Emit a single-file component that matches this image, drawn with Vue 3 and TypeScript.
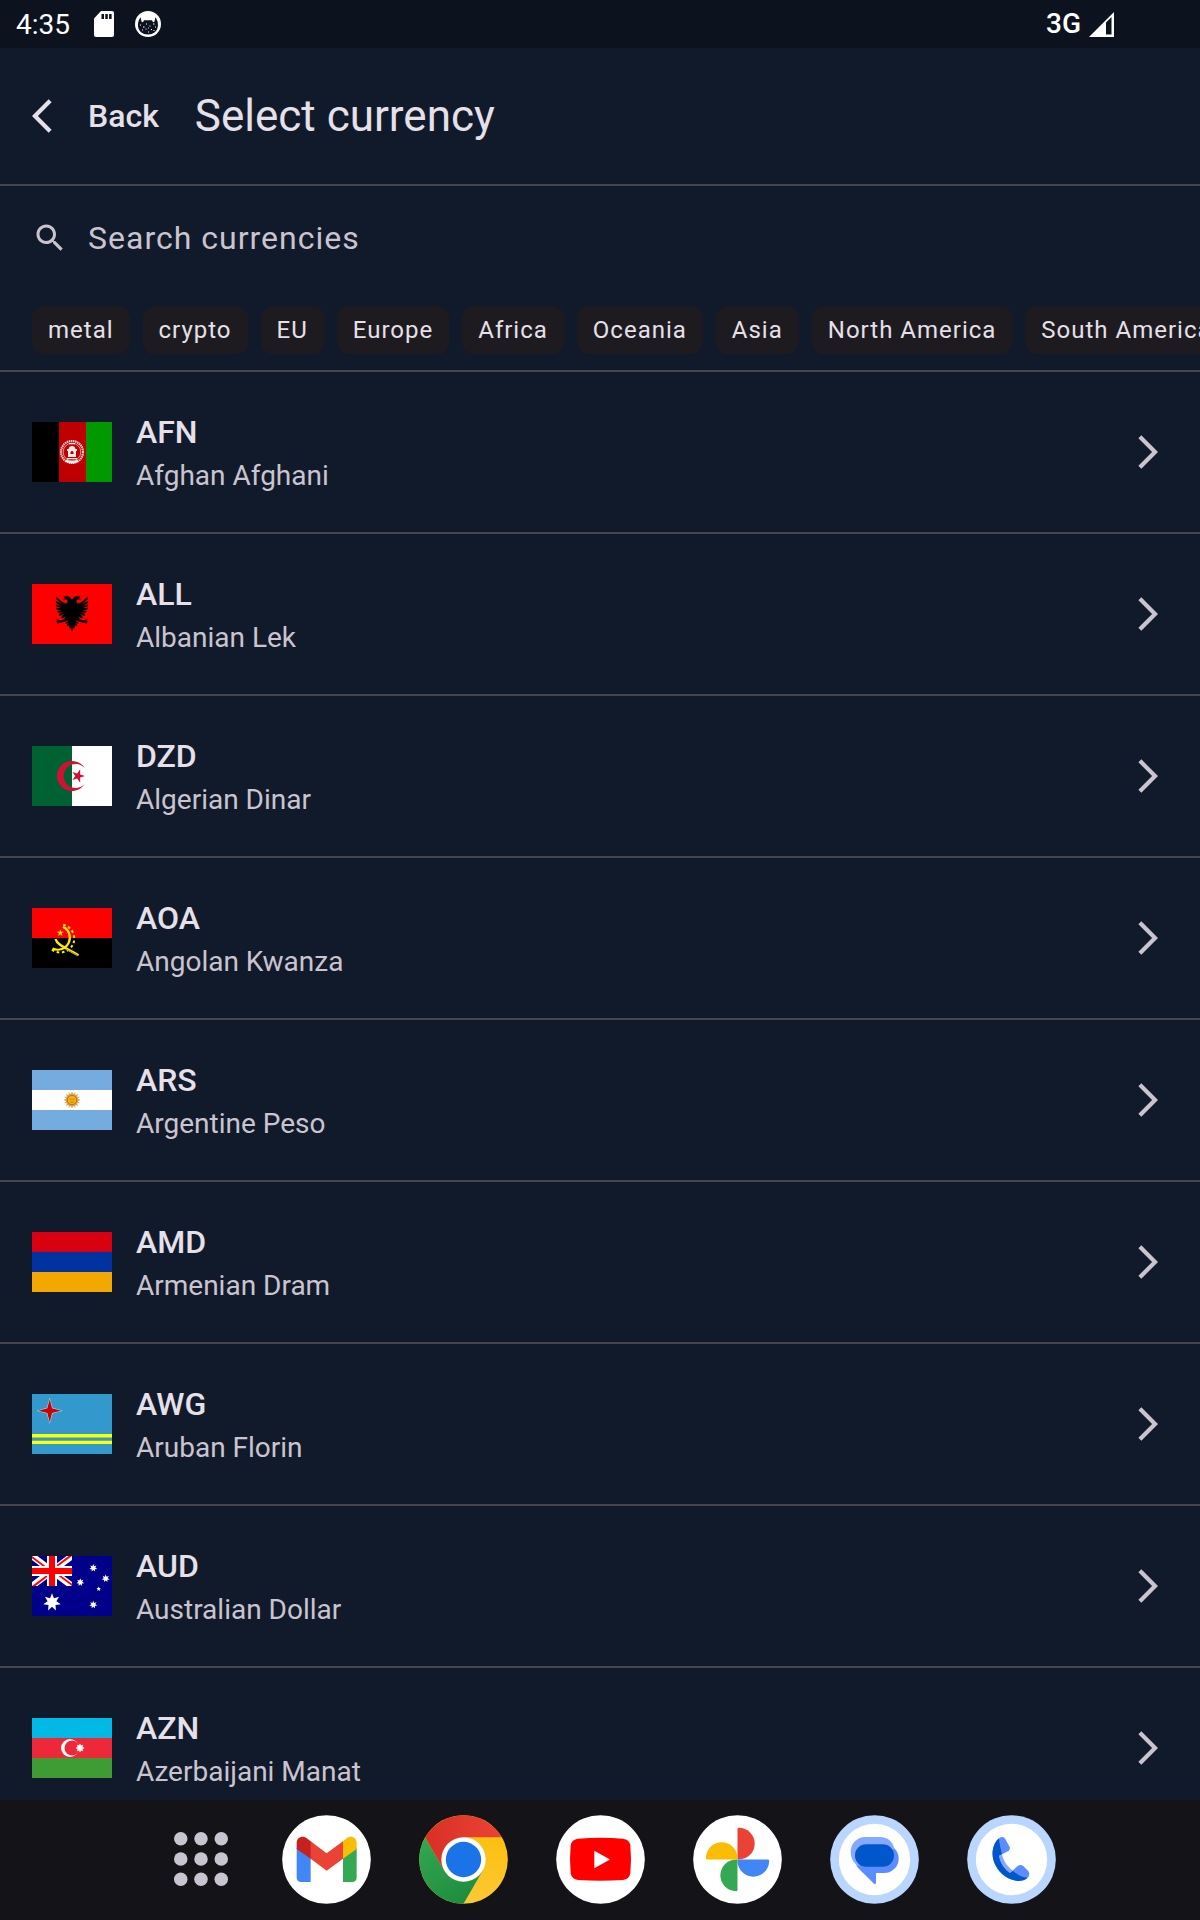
<script setup lang="ts">
import { computed, ref } from 'vue'

interface Currency {
  code: string
  name: string
}

const currencies: Currency[] = [
  { code: 'AFN', name: 'Afghan Afghani' },
  { code: 'ALL', name: 'Albanian Lek' },
  { code: 'DZD', name: 'Algerian Dinar' },
  { code: 'AOA', name: 'Angolan Kwanza' },
  { code: 'ARS', name: 'Argentine Peso' },
  { code: 'AMD', name: 'Armenian Dram' },
  { code: 'AWG', name: 'Aruban Florin' },
  { code: 'AUD', name: 'Australian Dollar' },
  { code: 'AZN', name: 'Azerbaijani Manat' },
]

const tags: string[] = [
  'metal',
  'crypto',
  'EU',
  'Europe',
  'Africa',
  'Oceania',
  'Asia',
  'North America',
  'South America',
]

const query = ref('')

const visible = computed(() => {
  const q = query.value.trim().toLowerCase()
  return currencies.filter((c) => (c.code + ' ' + c.name).toLowerCase().includes(q))
})

// Points of a regular star; the first tip points at `turn` degrees (0 = right).
function star(cx: number, cy: number, outer: number, inner: number, tips: number, turn = -90): string {
  const points: string[] = []
  for (let i = 0; i < tips * 2; i++) {
    const angle = ((turn + (i * 180) / tips) * Math.PI) / 180
    const r = i % 2 === 0 ? outer : inner
    points.push(`${(cx + r * Math.cos(angle)).toFixed(2)},${(cy + r * Math.sin(angle)).toFixed(2)}`)
  }
  return points.join(' ')
}
</script>

<template>
  <div class="screen">
    <div class="status">
      <span class="clock">4:35</span>
      <svg class="sd" viewBox="0 0 20 26" aria-hidden="true">
        <path fill="#fff" d="M7 0H18a2 2 0 0 1 2 2V24a2 2 0 0 1-2 2H2a2 2 0 0 1-2-2V7.500z" />
        <path fill="#0c121e" d="M7.500 3h2.500v5H7.500zM11.300 3h2.500v5h-2.500zM15.100 3h2.500v5h-2.500z" />
      </svg>
      <svg class="cat" viewBox="0 0 26 26" aria-hidden="true">
        <circle cx="13" cy="13" r="13" fill="#fff" />
        <path fill="#0c121e" d="M5.500 6.300L6.600 10.800 8 11.300 9 9.200H17l1 2.100 1.400-.5 1.100-4.500C24.800 12 24.300 23.500 13 23.500S1.200 12 5.500 6.300z" />
        <path
          stroke="#fff"
          stroke-width="1"
          d="M5 14h1M8 16h1.500M11 13h1M14.500 15h1M18 13h1.500M20 16h1M7 19h1M10.500 18h1M16 18.500h1M13 21h1M18.500 19.500h1M13 17h.8"
        />
      </svg>
      <span class="network">3G</span>
      <svg class="signal" viewBox="0 0 25 25" aria-hidden="true">
        <path fill="#fff" fill-rule="evenodd" d="M25 0V25H0zM17 10.500V22.500H22.500V5z" />
      </svg>
    </div>

    <header class="top">
      <button class="back" type="button">
        <svg viewBox="0 0 24 24" aria-hidden="true">
          <path fill="currentColor" d="M17.770 3.770 16 2 6 12l10 10 1.770-1.770L9.540 12z" />
        </svg>
        <span>Back</span>
      </button>
      <h1>Select currency</h1>
    </header>

    <section class="filters">
      <label class="search">
        <svg viewBox="0 0 24 24" aria-hidden="true">
          <path
            fill="currentColor"
            d="M15.500 14h-.79l-.28-.27C15.410 12.590 16 11.110 16 9.500 16 5.910 13.090 3 9.500 3S3 5.910 3 9.500 5.910 16 9.500 16c1.610 0 3.090-.59 4.230-1.570l.27.28v.79l5 4.990L20.490 19l-4.990-5zm-6 0C7.010 14 5 11.990 5 9.500S7.010 5 9.500 5 14 7.010 14 9.500 11.990 14 9.500 14z"
          />
        </svg>
        <input v-model="query" type="text" placeholder="Search currencies" aria-label="Search currencies" />
      </label>
      <div class="chips">
        <button v-for="tag in tags" :key="tag" type="button" class="chip">{{ tag }}</button>
      </div>
    </section>

    <ul class="list">
      <li v-for="c in visible" :key="c.code">
        <button type="button" class="row">
          <svg class="flag" viewBox="0 0 80 60" aria-hidden="true">
            <g v-if="c.code === 'AFN'">
              <rect width="80" height="60" fill="#000" />
              <rect x="27" width="27" height="60" fill="#bf0000" />
              <rect x="54" width="26" height="60" fill="#090" />
              <g fill="none" stroke="#fff">
                <circle cx="40" cy="30" r="11" stroke-width="2.200" stroke-dasharray="1.500 .6" opacity=".8" />
                <circle cx="40" cy="30" r="8.800" stroke-width=".8" opacity=".7" />
                <path d="M34 38.500q6 3.500 12 0" stroke-width="2.400" opacity=".85" />
              </g>
              <path fill="#fff" opacity=".9" d="M36 35V29h-1v-2h1.500q.5-3 3.500-3t3.500 3H45v2h-1v6zM35 36h10v1.200H35zM37 21h6v1.200H37z" />
              <path fill="#bf0000" d="M38.500 30q1.500-2 3 0v2h-3z" />
            </g>
            <g v-else-if="c.code === 'ALL'">
              <rect width="80" height="60" fill="#f00" />
              <g v-for="side in 2" :key="side" :transform="side === 2 ? 'matrix(-1 0 0 1 80 0)' : undefined">
                <path
                  d="M40.200 17C39.500 13 36 10.500 31 12.700L33 13.500 31 15.500 34 15.300C36 16 36 18 34.500 19.500L31 18.500 24 12.500 24.500 15.500 30 20 23.700 16.700 24.200 19 29.500 22 23.700 20.200 24.400 22.500 29.500 24 24 23.700 25 26 29.800 26 25 27 26.500 29 30.500 28 26.500 30.500 28 32 31.500 30 29 33.500 30.500 34.500 33.500 32.500 32 35.500 28 36.500 24 34.500 25.500 36.800 23.300 37.200 26 38 24.500 39.800 28 38.800 32.500 38 36 36 33 40 36 39 34.500 42.500 37.500 41 37 44.500 38.500 43.500 40.200 48z"
                />
              </g>
            </g>
            <g v-else-if="c.code === 'DZD'">
              <rect width="80" height="60" fill="#fff" />
              <rect width="40" height="60" fill="#006233" />
              <path fill="#d21034" d="M52.800 22.200A15 15 0 1 0 52.800 37.800 12 12 0 1 1 52.800 22.200z" />
              <polygon fill="#d21034" :points="star(46, 30, 7, 2.7, 5, 0)" />
            </g>
            <g v-else-if="c.code === 'AOA'">
              <rect width="80" height="60" fill="#000" />
              <rect width="80" height="30" fill="red" />
              <g fill="none" stroke="#ffec00">
                <path d="M31 18.700A12 12 0 1 1 20.500 40.500" stroke-width="2.200" />
                <path d="M31.200 16.800A14 14 0 1 1 19 41" stroke-width="2" stroke-dasharray="2.600 2.600" />
                <path d="M23.500 31C25 37 34 40 46.500 47.300" stroke-width="2.400" />
              </g>
              <path d="M34 41l12 6.600" stroke="#a89b00" stroke-width="1" />
              <polygon fill="#ffec00" :points="star(28.300, 24.900, 3.700, 1.400, 5)" />
            </g>
            <g v-else-if="c.code === 'ARS'">
              <rect width="80" height="60" fill="#74acdf" />
              <rect y="20" width="80" height="20" fill="#fff" />
              <polygon fill="#dba85c" :points="star(40, 30, 8.500, 6, 16)" />
              <circle cx="40" cy="30" r="4.600" fill="#f6b40e" stroke="#c07a1c" stroke-width="1.200" />
              <path d="M37.800 29.300h1.600M40.600 29.300h1.600M38.500 32h3" stroke="#a5621a" stroke-width=".8" />
            </g>
            <g v-else-if="c.code === 'AMD'">
              <rect width="80" height="20" fill="#d90012" />
              <rect y="20" width="80" height="20" fill="#0033a0" />
              <rect y="40" width="80" height="20" fill="#f2a800" />
            </g>
            <g v-else-if="c.code === 'AWG'">
              <rect width="80" height="60" fill="#39c" />
              <path fill="#ff0" d="M0 40h80v3.400H0zM0 46.700h80V50H0z" />
              <polygon fill="#fff" opacity=".7" :points="star(17.700, 16.700, 13, 4, 4)" />
              <polygon fill="#c00" :points="star(17.700, 16.700, 11.500, 3.400, 4)" />
            </g>
            <g v-else-if="c.code === 'AUD'">
              <rect width="80" height="60" fill="#00008b" />
              <svg width="40" height="30" viewBox="0 0 40 30">
                <path d="M0 0L40 30M40 0L0 30" stroke="#fff" stroke-width="6.500" />
                <path fill="red" d="M0 0L13.500 10H10.500L0 2.300zM40 0L26.500 10H23.500L36.500 0zM40 30L26.500 20H29.500L40 27.700zM0 30L13.500 20H16.500L3.500 30z" />
                <path d="M20 0V30M0 15H40" stroke="#fff" stroke-width="10" />
                <path d="M20 0V30M0 15H40" stroke="red" stroke-width="6" />
              </svg>
              <g fill="#fff">
                <polygon :points="star(20, 46.300, 9, 4.500, 7)" />
                <polygon :points="star(61.300, 12, 4, 2, 7)" />
                <polygon :points="star(73.700, 22.500, 4, 2, 7)" />
                <polygon :points="star(48.300, 26.300, 4, 2, 7)" />
                <polygon :points="star(61.300, 48.700, 4, 2, 7)" />
                <polygon :points="star(66.700, 33, 2.400, 1.100, 5)" />
              </g>
            </g>
            <g v-else-if="c.code === 'AZN'">
              <rect width="80" height="20" fill="#00b9e4" />
              <rect y="20" width="80" height="20" fill="#ed2939" />
              <rect y="40" width="80" height="20" fill="#3f9c35" />
              <circle cx="38" cy="30" r="9" fill="#fff" />
              <circle cx="40" cy="30" r="7.500" fill="#ed2939" />
              <polygon fill="#fff" :points="star(48, 30, 4.600, 2.700, 8)" />
            </g>
          </svg>
          <span class="names">
            <span class="code">{{ c.code }}</span>
            <span class="name">{{ c.name }}</span>
          </span>
          <svg class="go" viewBox="0 0 24 24" aria-hidden="true">
            <path fill="currentColor" d="M6.230 20.230 8 22l10-10L8 2 6.230 3.770 14.460 12z" />
          </svg>
        </button>
      </li>
    </ul>

    <nav class="dock" aria-label="Apps">
      <button class="launcher" type="button" aria-label="All apps">
        <svg viewBox="0 0 160 160" aria-hidden="true">
          <template v-for="y in 3" :key="y">
            <circle v-for="x in 3" :key="x" :cx="x * 60 - 40" :cy="y * 60 - 40" r="20" fill="#c8c5d0" />
          </template>
        </svg>
      </button>
      <div class="apps">
        <button class="app" type="button" aria-label="Gmail">
          <svg viewBox="0 0 267 267" aria-hidden="true">
            <circle cx="133.500" cy="133.500" r="133" fill="#fff" />
            <path fill="#4285f4" d="M44 98L86 128V201H57a13 13 0 0 1-13-13z" />
            <path fill="#34a853" d="M224 98L183 128V201h28a13 13 0 0 0 13-13z" />
            <path fill="#c5221f" d="M44 102V84C44 66 63 60 76 71L88 80V133z" />
            <path fill="#fbbc04" d="M224 102V84C224 66 205 60 192 71L181 80V133z" />
            <path fill="#ea4335" d="M86 79L134 115 183 79V131L134 167 86 131z" />
          </svg>
        </button>
        <button class="app" type="button" aria-label="Chrome">
          <svg viewBox="0 0 267 267" aria-hidden="true">
            <defs>
              <linearGradient id="chrome-red"><stop stop-color="#d93025" /><stop offset="1" stop-color="#ea4335" /></linearGradient>
              <linearGradient id="chrome-green" x2=".6" y2="1"><stop stop-color="#34a853" /><stop offset="1" stop-color="#1e8e3e" /></linearGradient>
              <linearGradient id="chrome-yellow" x1="0" y1="1" x2="0" y2="0"><stop stop-color="#fcc934" /><stop offset="1" stop-color="#fbbc04" /></linearGradient>
            </defs>
            <circle cx="133.500" cy="133.500" r="133" fill="url(#chrome-yellow)" />
            <path fill="url(#chrome-green)" d="M18.500 67A133 133 0 0 0 133.500 266.500L191 167 133 133 76 167z" />
            <path fill="url(#chrome-red)" d="M18.500 67A133 133 0 0 1 248.500 67H133.500V133L76 167z" />
            <circle cx="133.500" cy="133.500" r="66.500" fill="#fff" />
            <circle cx="133.500" cy="133.500" r="53" fill="#1a73e8" />
          </svg>
        </button>
        <button class="app" type="button" aria-label="YouTube">
          <svg viewBox="0 0 267 267" aria-hidden="true">
            <circle cx="133.500" cy="133.500" r="133" fill="#fff" />
            <path fill="red" d="M66 71Q133 66 201 71 220 73 223 91 227 133 223 175 220 193 201 195 133 200 66 195 47 193 44 175 40 133 44 91 47 73 66 71z" />
            <path fill="#fff" d="M115 107L162 133.500 115 160z" />
          </svg>
        </button>
        <button class="app" type="button" aria-label="Photos">
          <svg viewBox="0 0 267 267" aria-hidden="true">
            <circle cx="133.500" cy="133.500" r="133" fill="#fff" />
            <g transform="translate(133.500 133.500)">
              <path v-for="(color, i) in ['#ea4335', '#4285f4', '#34a853', '#fbbc04']" :key="color" :fill="color" :transform="`rotate(${i * 90})`" d="M0 0V-91Q0-95 4-95A47.500 47.500 0 0 1 4 0z" />
            </g>
          </svg>
        </button>
        <button class="app" type="button" aria-label="Messages">
          <svg viewBox="0 0 267 267" aria-hidden="true">
            <circle cx="133.500" cy="133.500" r="133" fill="#bad6ff" />
            <circle cx="133.500" cy="133.500" r="107" fill="#fff" />
            <path fill="#5c8dff" d="M108 88H163A43 43 0 0 1 163 174H138V203Q137 209 132 206L84 159Q75 149 75 121z" />
            <path fill="#85a9ff" d="M106 66H150C172 66 188 80 192 98L187 110 84 153C68 142 62 125 62 110A44 44 0 0 1 106 66z" />
            <rect x="75" y="88" width="117" height="67" rx="33.500" fill="#0057cc" />
          </svg>
        </button>
        <button class="app" type="button" aria-label="Phone">
          <svg viewBox="0 0 267 267" aria-hidden="true">
            <circle cx="133.500" cy="133.500" r="133" fill="#bad6ff" />
            <circle cx="133.500" cy="133.500" r="107" fill="#fff" />
            <path fill="#5c8dff" d="M96 70Q108 61 115 72L128 96Q131 103 124 108L100 121C104 138 118 158 133 170L152 153Q160 147 168 152L183 167Q190 175 184 186C168 203 138 200 114 184 88 164 74 136 77 108 79 92 86 78 96 70z" />
            <path fill="#0057cc" d="M96 70C97 88 102 104 105 118L96 122C100 145 115 163 129 174L137 167C150 178 165 188 182 188 166 203 138 200 114 184 88 164 74 136 77 108 79 92 86 78 96 70z" />
            <path fill="#85a9ff" d="M96 122L105 118C109 138 122 155 137 167L129 174C113 163 100 145 96 122z" />
          </svg>
        </button>
      </div>
    </nav>
  </div>
</template>

<style>
body {
  margin: 0;
  background: #111a2a;
}
</style>

<style scoped>
.screen {
  display: flex;
  flex-direction: column;
  height: 100vh;
  overflow: hidden;
  background: #111a2a;
  color: #e6e0e9;
  font-family: Roboto, sans-serif;
}

button,
input {
  margin: 0;
  padding: 0;
  border: 0;
  background: none;
  color: inherit;
  font: inherit;
}

button {
  cursor: pointer;
}

svg {
  display: block;
  flex: none;
}

.status {
  display: flex;
  align-items: center;
  flex: none;
  box-sizing: border-box;
  height: 48px;
  padding: 0 86px 0 16px;
  background: #0c121e;
  color: #fff;
  font-size: 28px;
  line-height: 48px;
}

.clock {
  padding-top: 2px;
}

.sd {
  width: 20px;
  height: 26px;
  margin-left: 24px;
}

.cat {
  width: 26px;
  height: 26px;
  margin-left: 21px;
}

.network {
  margin-left: auto;
  font-weight: 500;
}

.signal {
  width: 25px;
  height: 25px;
  margin-left: 8px;
}

.top {
  display: flex;
  align-items: center;
  flex: none;
  gap: 36px;
  height: 136px;
  padding-left: 22px;
  border-bottom: 2px solid #49454f;
}

.back {
  display: flex;
  align-items: center;
  gap: 26px;
  font-size: 32px;
  font-weight: 500;
}

.back svg,
.go {
  width: 40px;
  height: 40px;
}

h1 {
  margin: 0;
  font-size: 44px;
  font-weight: 400;
  line-height: 56px;
}

.filters {
  flex: none;
  border-bottom: 2px solid #49454f;
}

.search {
  display: flex;
  align-items: center;
  gap: 20px;
  height: 104px;
  padding: 0 32px;
  color: #cac4d0;
}

.search svg {
  width: 36px;
  height: 36px;
}

.search input {
  flex: 1;
  min-width: 0;
  height: 56px;
  outline: 0;
  font-size: 32px;
  letter-spacing: 1px;
}

.search input::placeholder {
  color: #cac4d0;
  opacity: 1;
}

.chips {
  display: flex;
  gap: 13px;
  padding: 16px 32px;
  overflow-x: auto;
  scrollbar-width: none;
}

.chip {
  flex: none;
  height: 48px;
  padding: 0 16px;
  border-radius: 12px;
  background: #1d1b20;
  font-size: 24px;
  letter-spacing: 1px;
}

.list {
  flex: 1;
  min-height: 0;
  margin: 0;
  padding: 0;
  overflow-y: auto;
  scrollbar-width: none;
  list-style: none;
}

.row {
  display: flex;
  align-items: center;
  gap: 24px;
  width: 100%;
  height: 162px;
  padding: 0 32px;
  border-bottom: 2px solid #49454f;
  text-align: left;
}

.flag {
  width: 80px;
  height: 60px;
}

.names {
  display: flex;
  flex-direction: column;
  flex: 1;
  min-width: 0;
}

.code {
  font-size: 32px;
  font-weight: 500;
  line-height: 48px;
}

.name {
  color: #cac4d0;
  font-size: 28px;
  line-height: 40px;
}

.go {
  color: #cac4d0;
}

.dock {
  display: flex;
  align-items: center;
  justify-content: center;
  flex: none;
  box-sizing: border-box;
  gap: 24px;
  height: 120px;
  padding-bottom: 2px;
  background: #141317;
}

.launcher {
  display: flex;
  justify-content: center;
  width: 114px;
}

.launcher svg {
  width: 54px;
  height: 54px;
}

.apps {
  display: flex;
  gap: 48px;
}

.app svg {
  width: 89px;
  height: 89px;
}
</style>
